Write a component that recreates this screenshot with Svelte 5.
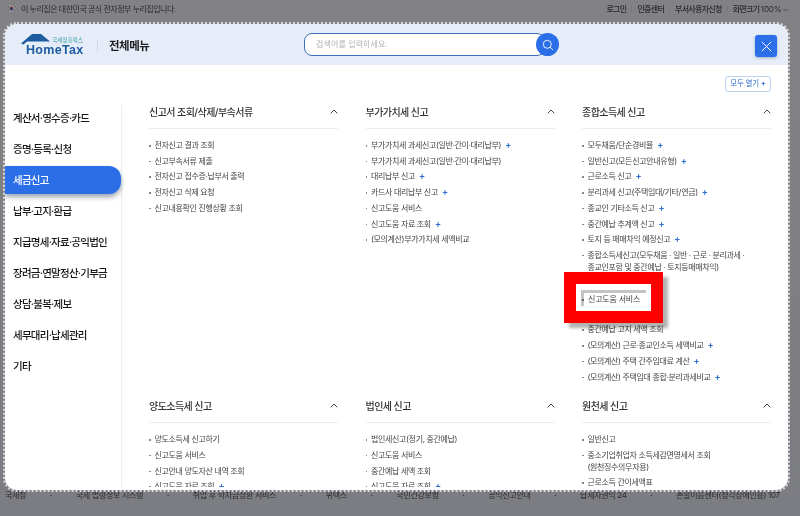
<script>
  const nav = ['계산서·영수증·카드', '증명·등록·신청', '세금신고', '납부·고지·환급', '지급명세·자료·공익법인', '장려금·연말정산·기부금', '상담·불복·제보', '세무대리·납세관리', '기타'];

  const sections = [
    { title: '신고서 조회/삭제/부속서류', items: [
      ['전자신고 결과 조회'], ['신고부속서류 제출'], ['전자신고 접수증·납부서 출력'], ['전자신고 삭제 요청'], ['신고내용확인 진행상황 조회']
    ]},
    { title: '부가가치세 신고', items: [
      ['부가가치세 과세신고(일반·간이·대리납부)', 1], ['부가가치세 과세신고(일반·간이·대리납부)'], ['대리납부 신고', 1], ['카드사 대리납부 신고', 1], ['신고도움 서비스'], ['신고도움 자료 조회', 1], ['(모의계산)부가가치세 세액비교']
    ]},
    { title: '종합소득세 신고', items: [
      ['모두채움/단순경비율', 1], ['일반신고(모든신고안내유형)', 1], ['근로소득 신고', 1], ['분리과세 신고(주택임대/기타/연금)', 1], ['종교인 기타소득 신고', 1], ['중간예납 추계액 신고', 1], ['토지 등 매매차익 예정신고', 1],
      ['종합소득세신고(모두채움 · 일반 · 근로 · 분리과세 · 종교인포함 및 중간예납 · 토지등매매차익)'], ['비사업자 신고'], ['신고도움 서비스'], ['신고도움 자료 조회', 1], ['중간예납 고지 세액 조회'], ['(모의계산) 근로·종교인소득 세액비교', 1], ['(모의계산) 주택 간주임대료 계산', 1], ['(모의계산) 주택임대 종합·분리과세비교', 1]
    ]},
    { title: '양도소득세 신고', items: [
      ['양도소득세 신고하기'], ['신고도움 서비스'], ['신고안내 양도자산 내역 조회'], ['신고도움 자료 조회', 1]
    ]},
    { title: '법인세 신고', items: [
      ['법인세신고(정기, 중간예납)'], ['신고도움 서비스'], ['중간예납 세액 조회'], ['신고도움 자료 조회', 1]
    ]},
    { title: '원천세 신고', items: [
      ['일반신고'], ['중소기업취업자 소득세감면명세서 조회 (원천징수의무자용)'], ['근로소득 간이세액표']
    ]}
  ];

  const footer = ['국세청', '국세 법령정보 시스템', '취업 후 학자금상환 서비스', '위택스', '국민건강보험', '공익신고안내', '납세자권익 24', '손말이음센터(청각장애인용) 107'];
</script>

<div class="page">
  <div class="topbar">
    <div class="notice">
      <svg width="9" height="7" viewBox="0 0 9 7"><rect width="9" height="7" fill="#8d8d90"/><circle cx="4.5" cy="3.5" r="1.7" fill="#7a2a30"/><path d="M2.8 3.5a1.7 1.7 0 0 0 3.4 0z" fill="#24407c"/><path d="M.6 1.2l1.2 1M7.2 1.2l1.2 1M.6 5.8l1.2-1M7.2 5.8l1.2-1" stroke="#222" stroke-width=".7"/></svg>
      <span>이 누리집은 대한민국 공식 전자정부 누리집입니다.</span>
    </div>
    <div class="util">
      <span>로그인</span><i></i><span>인증센터</span><i></i><span>부서사용자신청</span><i></i><span>화면크기 <em>100%</em> <svg width="5" height="4" viewBox="0 0 5 4"><path d="M.5 1l2 2 2-2" fill="none" stroke="#333" stroke-width=".7"/></svg></span>
    </div>
  </div>

  <div class="footer">
    {#each footer as f, i}
      {#if i > 0}<b>·</b>{/if}
      <span>{f}</span>
    {/each}
  </div>

  <div class="modal">
    <div class="head">
      <div class="logo">
        <svg class="roof" width="30" height="11" viewBox="0 0 30 11"><path d="M0 9.500L11 0h9l9 7.500H11.500L6 7.500 2.500 10.500z" fill="#1d5ca0"/></svg>
        <span class="logo-kr">국세청홈택스</span>
        <span class="logo-en">HomeTax</span>
      </div>
      <div class="title">전체메뉴</div>
      <div class="search">
        <div class="search-box">검색어를 입력하세요.</div>
        <div class="search-btn">
          <svg width="12" height="12" viewBox="0 0 12 12"><circle cx="5.3" cy="5.3" r="4" fill="none" stroke="#fff" stroke-width=".9"/><path d="M8.200 8.200L11 11" stroke="#fff" stroke-width=".9"/></svg>
        </div>
      </div>
      <div class="close">
        <svg width="11" height="11" viewBox="0 0 11 11"><path d="M.8.8l9.400 9.400M10.200.8L.8 10.200" stroke="#fff" stroke-width="1"/></svg>
      </div>
    </div>

    <div class="body">
      <div class="nav">
        {#each nav as n, i}
          <div class="nav-item" class:active={i === 2}>{n}</div>
        {/each}
      </div>
      <div class="main">
        <div class="open-row"><div class="open-all">모두 열기 <span>+</span></div></div>
        <div class="grid">
          {#each sections as s}
            <section>
              <div class="sec-head">
                <span>{s.title}</span>
                <svg width="8" height="5" viewBox="0 0 8 5"><path d="M.7 4.300L4 1l3.300 3.300" fill="none" stroke="#444" stroke-width="1"/></svg>
              </div>
              <ul>
                {#each s.items as it}
                  <li>{it[0]}{#if it[1]}<span class="plus">+</span>{/if}</li>
                {/each}
              </ul>
            </section>
          {/each}
        </div>
        <div class="scrollbar"></div>
      </div>
    </div>

    <div class="callout">
      <div class="callout-inner"><div class="callout-item">신고도움 서비스</div></div>
    </div>
  </div>
</div>

<style>
  :global(body) {
    margin: 0;
    background: #808084;
  }

  .page {
    position: relative;
    width: 800px;
    height: 516px;
    overflow: hidden;
    display: flex;
    flex-direction: column;
    justify-content: space-between;
    background: linear-gradient(#828284, #7c7d82);
    font-family: Inter, "Noto Sans CJK KR", sans-serif;
    color: #2a2a2e;
    filter: blur(0.35px);
  }

  .topbar {
    height: 17px;
    display: flex;
    align-items: center;
    justify-content: space-between;
    padding: 0 12px 0 7px;
    font-size: 8px;
  }

  .notice {
    display: flex;
    align-items: center;
    gap: 5px;
    letter-spacing: -0.5px;
  }

  .util {
    display: flex;
    align-items: center;
    gap: 5px;
    font-weight: 500;
    letter-spacing: -0.7px;
  }

  .util i {
    width: 1px;
    height: 7px;
    background: #77777a;
  }

  .util em {
    font-style: normal;
    font-weight: 400;
    letter-spacing: -0.1px;
  }

  .footer {
    display: flex;
    justify-content: space-between;
    padding: 0 20px 16px 5px;
    font-size: 8px;
    line-height: 10px;
    letter-spacing: -0.3px;
  }

  .modal {
    position: absolute;
    left: 5px;
    top: 24px;
    width: 783px;
    height: 466px;
    padding-bottom: 3px;
    box-sizing: border-box;
    background: #fff;
    border-radius: 12px;
    outline: 2px dotted #dcdcde;
    outline-offset: 0;
    overflow: hidden;
  }

  .head {
    height: 41px;
    background: #e6edf8;
    display: flex;
    align-items: center;
    position: relative;
  }

  .logo {
    position: relative;
    width: 92px;
    height: 28px;
  }

  .roof {
    position: absolute;
    left: 16px;
    top: 3px;
  }

  .logo-kr {
    position: absolute;
    left: 47px;
    top: 5px;
    font-size: 5.7px;
    line-height: 7px;
    color: #3aa0a8;
    letter-spacing: -0.1px;
    white-space: nowrap;
  }

  .logo-en {
    position: absolute;
    left: 21px;
    top: 13px;
    font-family: "Liberation Sans", sans-serif;
    font-size: 12.5px;
    line-height: 13px;
    font-weight: 700;
    color: #1d5ca0;
    letter-spacing: 0.3px;
  }

  .title {
    margin-left: 12px;
    font-size: 11.5px;
    font-weight: 700;
    color: #1f1f22;
    letter-spacing: -0.5px;
    position: relative;
    width: 195px;
  }

  .title::before {
    content: "";
    position: absolute;
    left: -12px;
    top: 3px;
    width: 1px;
    height: 12px;
    background: #d3d9e2;
  }

  .search {
    display: flex;
    align-items: center;
  }

  .search-box {
    width: 228px;
    height: 21px;
    border: 1px solid #3d70b8;
    border-radius: 8px;
    background: #fff;
    padding-left: 11px;
    font-size: 8px;
    line-height: 21px;
    color: #b2b2b6;
    letter-spacing: 0.1px;
  }

  .search-btn {
    width: 23px;
    height: 23px;
    margin-left: -9px;
    border-radius: 50%;
    background: #2a6ee8;
    display: flex;
    align-items: center;
    justify-content: center;
    position: relative;
  }

  .close {
    position: absolute;
    left: 750px;
    top: 11px;
    width: 22px;
    height: 22px;
    border-radius: 3px;
    background: #2a6ee8;
    box-shadow: 0 1px 3px rgba(30, 60, 120, 0.35);
    display: flex;
    align-items: center;
    justify-content: center;
  }

  .body {
    display: flex;
    height: 422px;
    overflow: hidden;
  }

  .nav {
    width: 116px;
    flex: none;
    margin-top: 40px;
    border-right: 1px solid #eeeef0;
    display: flex;
    flex-direction: column;
    gap: 3px;
    margin-right: 27px;
  }

  .nav-item {
    height: 28px;
    line-height: 30px;
    padding-left: 8px;
    margin-top: -1px;
    margin-bottom: 1px;
    width: 116px;
    font-size: 10.5px;
    font-weight: 500;
    letter-spacing: -0.75px;
    color: #161618;
    white-space: nowrap;
    box-sizing: border-box;
  }

  .nav-item.active {
    background: #2a6ee8;
    color: #fff;
    border-radius: 0 12px 12px 0;
    box-shadow: 0 3px 5px rgba(40, 50, 80, 0.45);
  }

  .main {
    flex: 1;
    position: relative;
    min-width: 0;
    padding-right: 17px;
  }

  .open-row {
    display: flex;
    justify-content: flex-end;
    padding-top: 11px;
    height: 20px;
  }

  .open-all {
    width: 46px;
    height: 16px;
    box-sizing: border-box;
    border: 1px solid #bcd3f2;
    border-radius: 3px;
    background: #fff;
    color: #2f6fd0;
    font-size: 7.5px;
    line-height: 14px;
    text-align: center;
    letter-spacing: -0.2px;
  }

  .open-all span {
    font-weight: 700;
  }

  .grid {
    display: grid;
    grid-template-columns: repeat(3, 189px);
    column-gap: 27.5px;
    row-gap: 3px;
  }

  .sec-head {
    height: 30px;
    padding-bottom: 2px;
    border-bottom: 1px solid #eeeef0;
    display: flex;
    align-items: center;
    justify-content: space-between;
    font-size: 10px;
    font-weight: 500;
    color: #333;
    letter-spacing: -0.55px;
  }

  ul {
    list-style: none;
    margin: 0;
    padding: 11px 0 0;
  }

  li {
    position: relative;
    padding-left: 5.5px;
    margin-bottom: 4px;
    font-size: 8px;
    line-height: 11.7px;
    color: #444;
    letter-spacing: -0.35px;
    word-break: keep-all;
  }

  li::before {
    content: "";
    position: absolute;
    left: 0;
    top: 5px;
    width: 1.5px;
    height: 1.5px;
    background: #888;
  }

  .plus {
    margin-left: 4px;
    color: #2f6fd0;
    font-weight: 700;
    font-size: 9px;
    line-height: 8px;
  }

  .scrollbar {
    position: absolute;
    left: 656px;
    top: 40px;
    width: 4px;
    height: 165px;
    background: #e2e2e4;
    border-radius: 2px;
  }

  .callout {
    position: absolute;
    left: 559px;
    top: 248px;
    width: 99px;
    height: 51px;
    box-sizing: border-box;
    border: 12px solid #f00;
    background: #fff;
    box-shadow: 5px 5px 3px rgba(0, 0, 0, 0.3);
  }

  .callout-inner {
    padding: 6px 5px 5px;
  }

  .callout-item {
    position: relative;
    height: 13px;
    padding-left: 4px;
    border-top: 3px solid #c4c4c4;
    border-left: 3px solid #c4c4c4;
    font-size: 8px;
    line-height: 13px;
    color: #444;
    letter-spacing: -0.2px;
    white-space: nowrap;
  }

  .callout-item::before {
    content: "";
    position: absolute;
    left: -2px;
    top: 6px;
    width: 1.5px;
    height: 1.5px;
    background: #666;
  }
</style>
